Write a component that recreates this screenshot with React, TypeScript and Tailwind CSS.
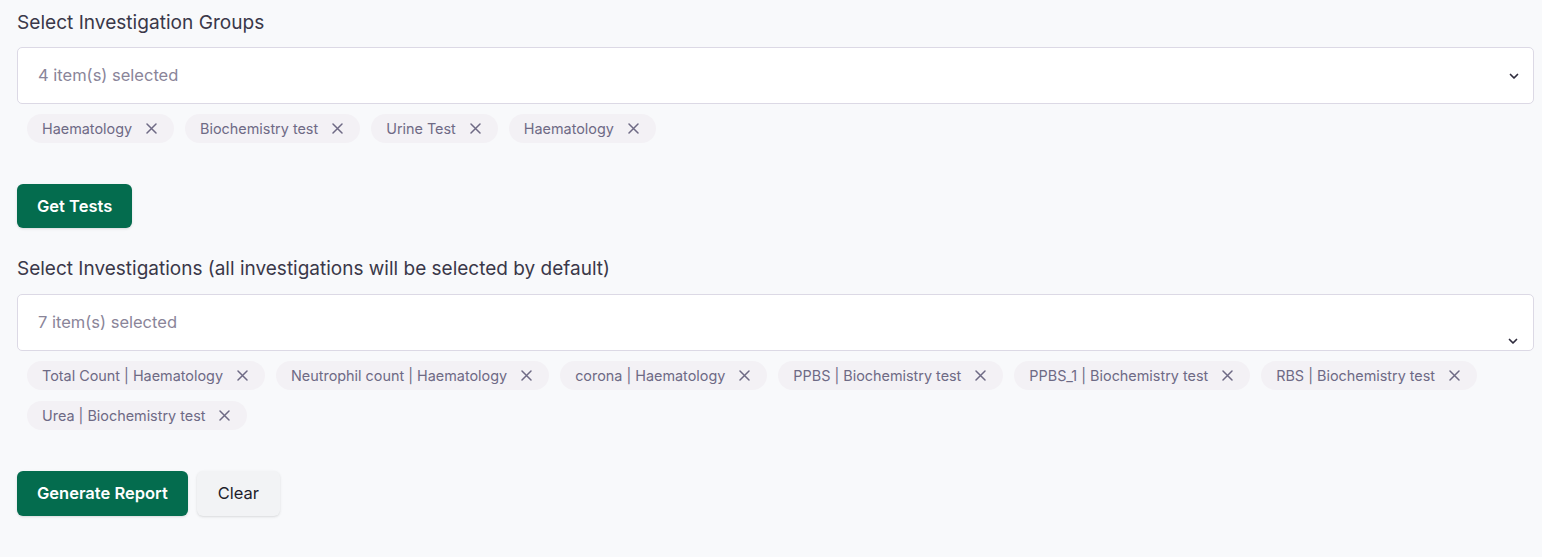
const groups = ["Haematology", "Biochemistry test", "Urine Test", "Haematology"];

const investigations = [
  "Total Count | Haematology",
  "Neutrophil count | Haematology",
  "corona | Haematology",
  "PPBS | Biochemistry test",
  "PPBS_1 | Biochemistry test",
  "RBS | Biochemistry test",
  "Urea | Biochemistry test",
];

function Chevron() {
  return (
    <svg width="12" height="12" viewBox="0 0 12 12" fill="none" className="text-[#2f2c3d]">
      <path d="M2.5 4.5 6 8l3.5-3.5" stroke="currentColor" strokeWidth="1.7" strokeLinecap="round" strokeLinejoin="round" />
    </svg>
  );
}

function Chip({ label }: { label: string }) {
  return (
    <span className="inline-flex h-[29px] items-center gap-[14px] rounded-full bg-[#f3f1f5] pl-[15px] pr-[17px] text-[14.4px] text-[#6e6a85]">
      {label}
      <svg width="11" height="11" viewBox="0 0 11 11" fill="none">
        <path d="M1 1l9 9M10 1l-9 9" stroke="#6e6a85" strokeWidth="1.5" strokeLinecap="round" />
      </svg>
    </span>
  );
}

function MultiSelect({ count, chevronBottom }: { count: number; chevronBottom?: boolean }) {
  return (
    <div className="relative flex h-[57px] items-center rounded-[5px] border border-[#dcd9e5] bg-white px-[20px]">
      <span className="text-[16.5px] text-[#8a8599]">{count} item(s) selected</span>
      <span className={chevronBottom ? "absolute right-[14px] bottom-[3px]" : "absolute right-[13px] top-[22px]"}>
        <Chevron />
      </span>
    </div>
  );
}

export default function App() {
  return (
    <div className="min-h-screen bg-[#f8f9fb] pl-[17px] pr-[8px] pt-[9px] font-['Inter',sans-serif] text-[#3a3849]">
      <div className="mb-[12px] text-[19.1px] leading-[26px]">Select Investigation Groups</div>
      <MultiSelect count={4} />
      <div className="mt-[10px] flex flex-wrap gap-x-[11px] gap-y-[11px] pl-[10px]">
        {groups.map((g, i) => (
          <Chip key={i} label={g} />
        ))}
      </div>

      <button className="mt-[41px] h-[44px] rounded-[6px] bg-[#046c4e] px-[20px] text-[16.5px] font-semibold text-white shadow-sm">
        Get Tests
      </button>

      <div className="mt-[28px] mb-[12px] text-[19px] leading-[26px]">
        Select Investigations (all investigations will be selected by default)
      </div>
      <MultiSelect count={7} chevronBottom />
      <div className="mt-[10px] flex flex-wrap gap-x-[11px] gap-y-[11px] pl-[10px]">
        {investigations.map((g, i) => (
          <Chip key={i} label={g} />
        ))}
      </div>

      <div className="mt-[41px] flex gap-[9px]">
        <button className="h-[45px] rounded-[6px] bg-[#046c4e] px-[20px] text-[16.5px] font-semibold text-white shadow-sm">
          Generate Report
        </button>
        <button className="h-[45px] rounded-[6px] bg-[#f2f3f5] px-[21px] text-[16.5px] font-normal text-[#1f1d2b] shadow-sm">
          Clear
        </button>
      </div>
    </div>
  );
}
